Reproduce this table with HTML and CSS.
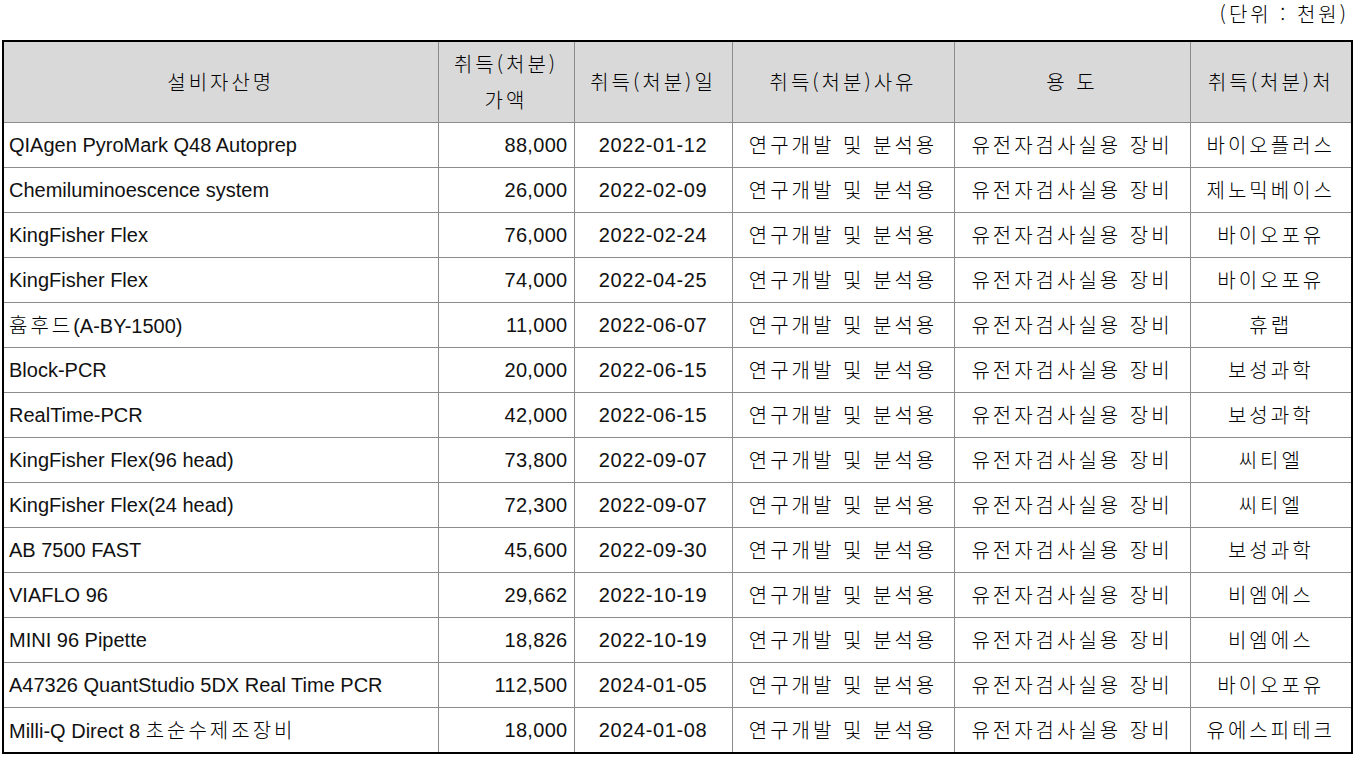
FILE: index.html
```html
<!DOCTYPE html>
<html lang="ko">
<head>
<meta charset="utf-8">
<link rel="stylesheet" href="styles.css">
</head>
<body>
<div class="unit k">(단위 : 천원)</div>
<table class="grid">
<colgroup>
<col class="c1"><col class="c2"><col class="c3"><col class="c4"><col class="c5"><col class="c6">
</colgroup>
<thead>
<tr><th class="k">설비자산명</th><th class="k">취득(처분)<br>가액</th><th class="k">취득(처분)일</th><th class="k">취득(처분)사유</th><th class="k">용 도</th><th class="k">취득(처분)처</th></tr>
</thead>
<tbody>
<tr><td class="l">QIAgen PyroMark Q48 Autoprep</td><td class="r">88,000</td><td class="d">2022-01-12</td><td class="k">연구개발 및 분석용</td><td class="k">유전자검사실용 장비</td><td class="k">바이오플러스</td></tr>
<tr><td class="l">Chemiluminoescence system</td><td class="r">26,000</td><td class="d">2022-02-09</td><td class="k">연구개발 및 분석용</td><td class="k">유전자검사실용 장비</td><td class="k">제노믹베이스</td></tr>
<tr><td class="l">KingFisher Flex</td><td class="r">76,000</td><td class="d">2022-02-24</td><td class="k">연구개발 및 분석용</td><td class="k">유전자검사실용 장비</td><td class="k">바이오포유</td></tr>
<tr><td class="l">KingFisher Flex</td><td class="r">74,000</td><td class="d">2022-04-25</td><td class="k">연구개발 및 분석용</td><td class="k">유전자검사실용 장비</td><td class="k">바이오포유</td></tr>
<tr><td class="l"><span class="k">흄후드</span>(A-BY-1500)</td><td class="r">11,000</td><td class="d">2022-06-07</td><td class="k">연구개발 및 분석용</td><td class="k">유전자검사실용 장비</td><td class="k">휴랩</td></tr>
<tr><td class="l">Block-PCR</td><td class="r">20,000</td><td class="d">2022-06-15</td><td class="k">연구개발 및 분석용</td><td class="k">유전자검사실용 장비</td><td class="k">보성과학</td></tr>
<tr><td class="l">RealTime-PCR</td><td class="r">42,000</td><td class="d">2022-06-15</td><td class="k">연구개발 및 분석용</td><td class="k">유전자검사실용 장비</td><td class="k">보성과학</td></tr>
<tr><td class="l">KingFisher Flex(96 head)</td><td class="r">73,800</td><td class="d">2022-09-07</td><td class="k">연구개발 및 분석용</td><td class="k">유전자검사실용 장비</td><td class="k">씨티엘</td></tr>
<tr><td class="l">KingFisher Flex(24 head)</td><td class="r">72,300</td><td class="d">2022-09-07</td><td class="k">연구개발 및 분석용</td><td class="k">유전자검사실용 장비</td><td class="k">씨티엘</td></tr>
<tr><td class="l">AB 7500 FAST</td><td class="r">45,600</td><td class="d">2022-09-30</td><td class="k">연구개발 및 분석용</td><td class="k">유전자검사실용 장비</td><td class="k">보성과학</td></tr>
<tr><td class="l">VIAFLO 96</td><td class="r">29,662</td><td class="d">2022-10-19</td><td class="k">연구개발 및 분석용</td><td class="k">유전자검사실용 장비</td><td class="k">비엠에스</td></tr>
<tr><td class="l">MINI 96 Pipette</td><td class="r">18,826</td><td class="d">2022-10-19</td><td class="k">연구개발 및 분석용</td><td class="k">유전자검사실용 장비</td><td class="k">비엠에스</td></tr>
<tr><td class="l">A47326 QuantStudio 5DX Real Time PCR</td><td class="r">112,500</td><td class="d">2024-01-05</td><td class="k">연구개발 및 분석용</td><td class="k">유전자검사실용 장비</td><td class="k">바이오포유</td></tr>
<tr><td class="l">Milli-Q Direct 8 <span class="k">초순수제조장비</span></td><td class="r">18,000</td><td class="d">2024-01-08</td><td class="k">연구개발 및 분석용</td><td class="k">유전자검사실용 장비</td><td class="k">유에스피테크</td></tr>
</tbody>
</table>
</body>
</html>
```
FILE: styles.css
```css
html, body {
  margin: 0;
  padding: 0;
  background: #fff;
}
body {
  font-family: "Liberation Sans", "Noto Sans CJK JP", sans-serif;
  font-size: 20px;
  color: #111;
  width: 1355px;
}
.k {
  font-family: "Noto Sans CJK JP", "Liberation Sans", sans-serif;
  font-size: 20px;
  font-weight: 300;
  letter-spacing: 3px;
  color: #000;
}
.unit {
  text-align: right;
  height: 40px;
  line-height: 28px;
  padding-right: 6px;
  box-sizing: border-box;
}
.grid {
  margin-left: 2px;
  width: 1349px;
  border-collapse: collapse;
  table-layout: fixed;
  border: 2px solid #000;
}
.c1 { width: 435px; }
.c2 { width: 136px; }
.c3 { width: 158px; }
.c4 { width: 222px; }
.c5 { width: 236px; }
.c6 { width: 162px; }
.grid th, .grid td {
  border: 1px solid #8c8c8c;
  padding: 0 6px;
  white-space: nowrap;
  overflow: hidden;
}
.grid th {
  background: #d9d9d9;
  height: 80px;
  line-height: 36px;
  text-align: center;
}
.grid td {
  height: 44px;
  text-align: center;
  line-height: 24px;
}
.grid td.l { text-align: left; padding-left: 5px; }
.grid td.r { text-align: right; padding-right: 6px; letter-spacing: 0.3px; }
.grid td.d { letter-spacing: 0.6px; }
```
